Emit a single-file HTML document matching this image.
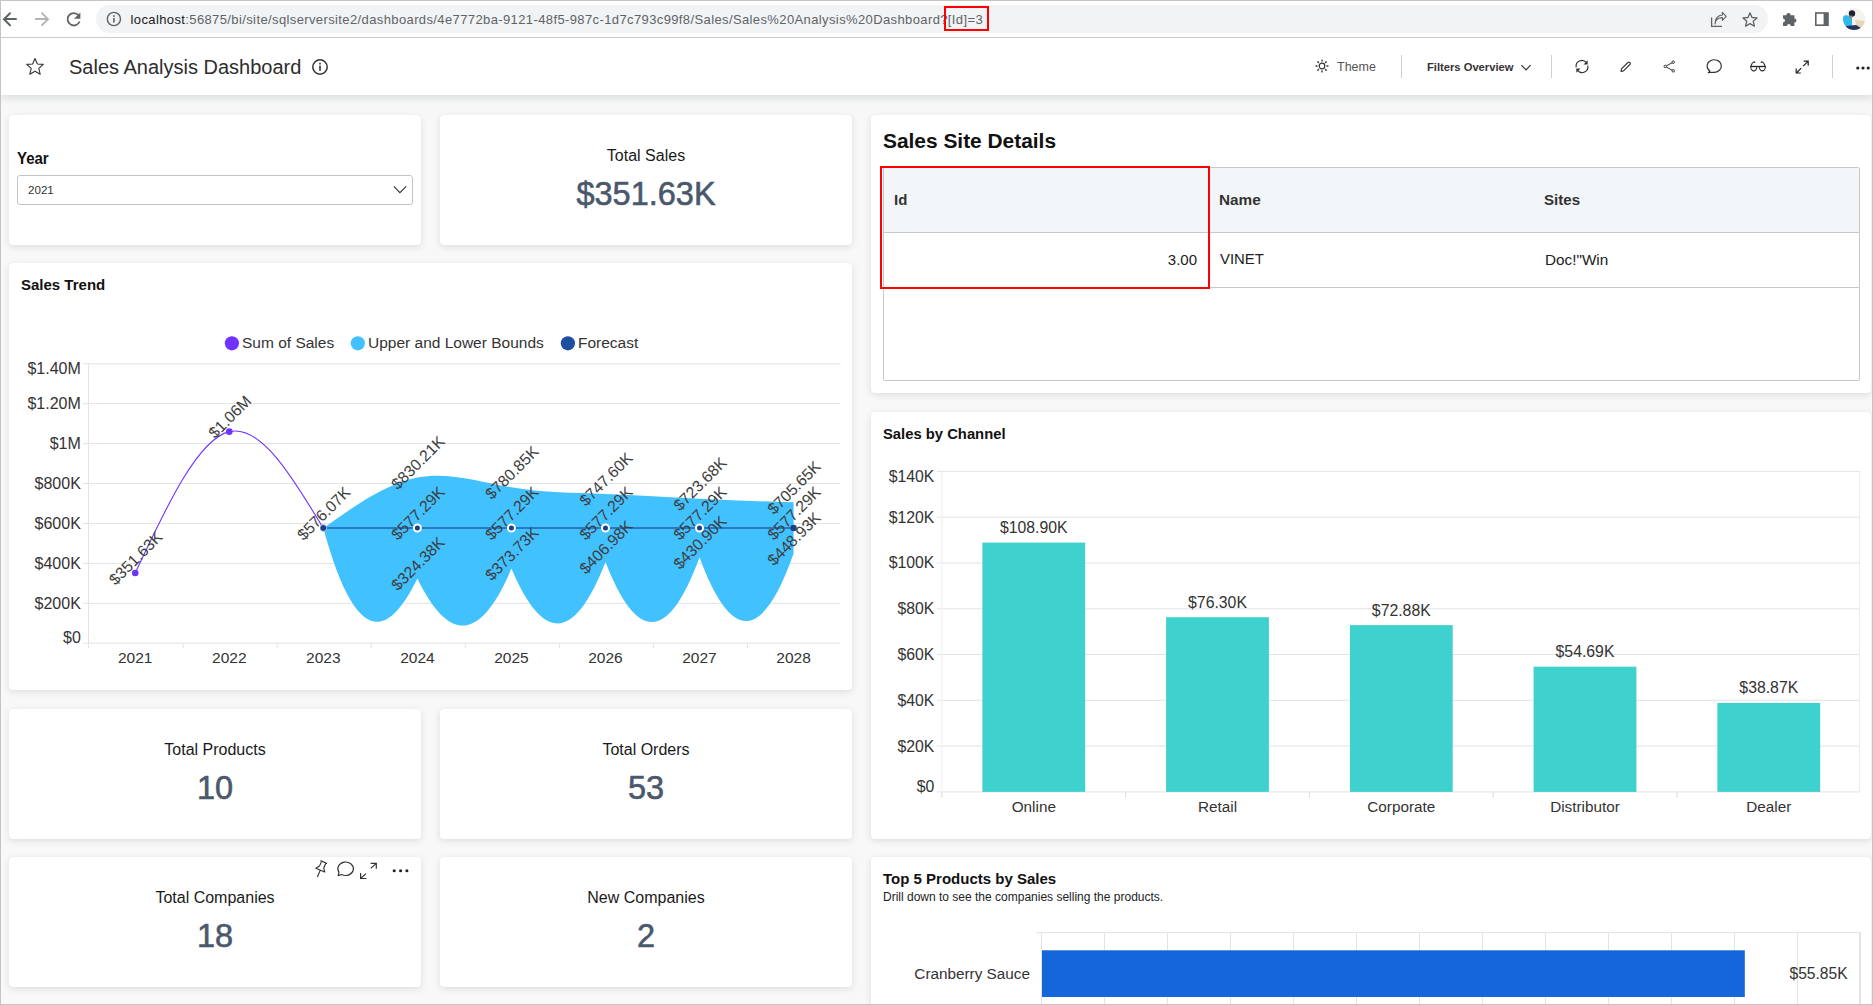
<!DOCTYPE html><html><head><meta charset="utf-8"><title>Sales Analysis Dashboard</title><style>
*{box-sizing:border-box}
html,body{margin:0;padding:0}
body{width:1873px;height:1005px;overflow:hidden;position:relative;background:#f8f8f8;font-family:"Liberation Sans",sans-serif;color:#222}
.a{position:absolute}
.t{position:absolute;white-space:nowrap;line-height:1}
.panel{position:absolute;background:#fff;border-radius:4px;box-shadow:0 2px 7px rgba(30,40,60,0.12),0 0 1px rgba(0,0,0,0.06)}
.kt{position:absolute;left:0;right:0;text-align:center;white-space:nowrap;line-height:1;font-size:16px;color:#1a1a1a}
.kv{position:absolute;left:0;right:0;text-align:center;white-space:nowrap;line-height:1;font-size:32.5px;color:#4a586b;-webkit-text-stroke:0.6px #4a586b}
</style></head><body>
<div class="panel" style="left:9px;top:115px;width:412px;height:130px"><div class="t" style="left:8px;top:35.5px;font-size:15px;font-weight:bold;color:#111;transform:scaleY(1.15);transform-origin:0 100%">Year</div><div class="a" style="left:8px;top:60px;width:396px;height:30px;border:1px solid #c4c4c4;border-radius:3px;background:#fff"></div><div class="t" style="left:19px;top:69px;font-size:11.6px;color:#333">2021</div><svg class="a" style="left:383px;top:69px" width="15" height="10" viewBox="0 0 15 10"><path d="M1.9 2.3 7.9 8.7 14.2 2.3" fill="none" stroke="#333" stroke-width="1.1"/></svg></div>
<div class="panel" style="left:440px;top:115px;width:412px;height:130px"><div class="kt" style="top:33px">Total Sales</div><div class="kv" style="top:63px">$351.63K</div></div>
<div class="panel" style="left:9px;top:709px;width:412px;height:130px"><div class="kt" style="top:33px">Total Products</div><div class="kv" style="top:63px">10</div></div>
<div class="panel" style="left:440px;top:709px;width:412px;height:130px"><div class="kt" style="top:33px">Total Orders</div><div class="kv" style="top:63px">53</div></div>
<div class="panel" style="left:9px;top:857px;width:412px;height:130px"><div class="kt" style="top:33px">Total Companies</div><div class="kv" style="top:63px">18</div></div>
<div class="panel" style="left:440px;top:857px;width:412px;height:130px"><div class="kt" style="top:33px">New Companies</div><div class="kv" style="top:63px">2</div></div>
<div class="panel" style="left:871px;top:115px;width:1000px;height:278px"><div class="t" style="left:12px;top:15.5px;font-size:20.9px;font-weight:bold;color:#111">Sales Site Details</div><div class="a" style="left:12px;top:52px;width:977px;height:214px;border:1px solid #c8c8c8;border-radius:2px"></div><div class="a" style="left:13px;top:53px;width:975px;height:64px;background:#f3f6f9"></div><div class="a" style="left:12px;top:117px;width:977px;height:1px;background:#c8c8c8"></div><div class="a" style="left:12px;top:172px;width:977px;height:1px;background:#c8c8c8"></div><div class="t" style="left:23px;top:77px;font-size:15px;font-weight:bold;color:#333">Id</div><div class="t" style="left:348px;top:77px;font-size:15.3px;font-weight:bold;color:#333">Name</div><div class="t" style="left:673px;top:77px;font-size:15.1px;font-weight:bold;color:#333">Sites</div><div class="t" style="left:229px;width:97px;text-align:right;top:137px;font-size:15px;color:#222">3.00</div><div class="t" style="left:349px;top:137px;font-size:14.9px;color:#222">VINET</div><div class="t" style="left:674px;top:137px;font-size:15.3px;color:#222">Doc!"Win</div><div class="a" style="left:9px;top:51px;width:330px;height:123px;border:2px solid #fe0000"></div></div>
<div class="panel" style="left:9px;top:263px;width:843px;height:427px"><div class="t" style="left:12px;top:14px;font-size:15px;font-weight:bold;color:#111">Sales Trend</div></div>
<div class="panel" style="left:871px;top:412px;width:1000px;height:427px"><div class="t" style="left:12px;top:15px;font-size:14.8px;font-weight:bold;color:#111">Sales by Channel</div></div>
<div class="panel" style="left:871px;top:857px;width:1000px;height:163px"><div class="t" style="left:12px;top:14px;font-size:15px;font-weight:bold;color:#111">Top 5 Products by Sales</div><div class="t" style="left:12px;top:34px;font-size:12px;color:#222">Drill down to see the companies selling the products.</div></div>
<svg class="a" style="left:0;top:0" width="1873" height="1005" viewBox="0 0 1873 1005">
<path d="M83 643.2H840.6" stroke="#e3e3e3" stroke-width="1"/>
<path d="M83 603.3H840.6" stroke="#e3e3e3" stroke-width="1"/>
<path d="M83 563.4H840.6" stroke="#e3e3e3" stroke-width="1"/>
<path d="M83 523.5H840.6" stroke="#e3e3e3" stroke-width="1"/>
<path d="M83 483.5H840.6" stroke="#e3e3e3" stroke-width="1"/>
<path d="M83 443.6H840.6" stroke="#e3e3e3" stroke-width="1"/>
<path d="M83 403.7H840.6" stroke="#e3e3e3" stroke-width="1"/>
<path d="M83 363.8H840.6" stroke="#e3e3e3" stroke-width="1"/>
<path d="M88.5 363.8V643.2" stroke="#e3e3e3" stroke-width="1"/>
<path d="M88.6 643.2V648.2" stroke="#e3e3e3" stroke-width="1"/>
<path d="M183.2 643.2V648.2" stroke="#e3e3e3" stroke-width="1"/>
<path d="M277.2 643.2V648.2" stroke="#e3e3e3" stroke-width="1"/>
<path d="M371.2 643.2V648.2" stroke="#e3e3e3" stroke-width="1"/>
<path d="M465.3 643.2V648.2" stroke="#e3e3e3" stroke-width="1"/>
<path d="M559.4 643.2V648.2" stroke="#e3e3e3" stroke-width="1"/>
<path d="M653.4 643.2V648.2" stroke="#e3e3e3" stroke-width="1"/>
<path d="M747.5 643.2V648.2" stroke="#e3e3e3" stroke-width="1"/>
<text x="80.8" y="374.1" text-anchor="end" font-size="16" font-family="Liberation Sans" fill="#333" fill="#222">$1.40M</text>
<text x="80.8" y="408.9" text-anchor="end" font-size="16" font-family="Liberation Sans" fill="#333" fill="#222">$1.20M</text>
<text x="80.8" y="448.5" text-anchor="end" font-size="16" font-family="Liberation Sans" fill="#333" fill="#222">$1M</text>
<text x="80.8" y="488.5" text-anchor="end" font-size="16" font-family="Liberation Sans" fill="#333" fill="#222">$800K</text>
<text x="80.8" y="528.5" text-anchor="end" font-size="16" font-family="Liberation Sans" fill="#333" fill="#222">$600K</text>
<text x="80.8" y="568.5" text-anchor="end" font-size="16" font-family="Liberation Sans" fill="#333" fill="#222">$400K</text>
<text x="80.8" y="608.5" text-anchor="end" font-size="16" font-family="Liberation Sans" fill="#333" fill="#222">$200K</text>
<text x="80.8" y="643.1" text-anchor="end" font-size="16" font-family="Liberation Sans" fill="#333" fill="#222">$0</text>
<text x="135.2" y="663.1" text-anchor="middle" font-size="15.5" font-family="Liberation Sans" fill="#333" fill="#222">2021</text>
<text x="229.3" y="663.1" text-anchor="middle" font-size="15.5" font-family="Liberation Sans" fill="#333" fill="#222">2022</text>
<text x="323.3" y="663.1" text-anchor="middle" font-size="15.5" font-family="Liberation Sans" fill="#333" fill="#222">2023</text>
<text x="417.4" y="663.1" text-anchor="middle" font-size="15.5" font-family="Liberation Sans" fill="#333" fill="#222">2024</text>
<text x="511.4" y="663.1" text-anchor="middle" font-size="15.5" font-family="Liberation Sans" fill="#333" fill="#222">2025</text>
<text x="605.5" y="663.1" text-anchor="middle" font-size="15.5" font-family="Liberation Sans" fill="#333" fill="#222">2026</text>
<text x="699.5" y="663.1" text-anchor="middle" font-size="15.5" font-family="Liberation Sans" fill="#333" fill="#222">2027</text>
<text x="793.6" y="663.1" text-anchor="middle" font-size="15.5" font-family="Liberation Sans" fill="#333" fill="#222">2028</text>
<circle cx="231.9" cy="343.3" r="7.1" fill="#7033ff"/>
<text x="242" y="347.8" font-size="15.5" font-family="Liberation Sans" fill="#333" fill="#222">Sum of Sales</text>
<circle cx="357.8" cy="343.3" r="7.1" fill="#42c1ff"/>
<text x="368" y="347.8" font-size="15.5" font-family="Liberation Sans" fill="#333" fill="#222">Upper and Lower Bounds</text>
<circle cx="567.9" cy="343.3" r="7.1" fill="#1d4f9e"/>
<text x="578" y="347.8" font-size="15.5" font-family="Liberation Sans" fill="#333" fill="#222">Forecast</text>
<path d="M323.32 528.23C354.68 505.85 386.03 483.47 417.38 477.51C448.72 471.56 480.07 482.04 511.42 487.36C542.77 492.69 574.12 492.87 605.48 494.00C636.82 495.13 668.18 497.22 699.52 498.77C730.88 500.33 762.23 501.35 793.58 502.37L793.58 553.61C762.23 642.8 730.88 642.8 699.52 557.20C668.18 642.8 636.82 642.8 605.48 561.98C574.12 642.8 542.77 642.8 511.42 568.61C480.07 642.8 448.72 642.8 417.38 578.46C386.03 642.8 354.68 642.8 323.32 528.23Z" fill="#42c1ff"/>
<path d="M323.32 527.99H793.58" stroke="#1d4f9e" stroke-opacity="0.85" stroke-width="1.7"/>
<path d="M135.22 573.02C166.57 506.07 197.92 439.12 229.27 431.65C260.62 424.19 291.97 476.21 323.32 528.23" fill="none" stroke="#7033ff" stroke-width="1.1"/>
<circle cx="135.22" cy="573.02" r="3.3" fill="#7033ff"/>
<circle cx="229.27" cy="431.65" r="3.3" fill="#7033ff"/>
<circle cx="323.32" cy="527.99" r="3.4" fill="#1d3f8a" stroke="#fff" stroke-width="0.6"/>
<circle cx="417.38" cy="527.99" r="3.5" fill="#1d3f8a" stroke="#fff" stroke-width="2"/>
<circle cx="511.42" cy="527.99" r="3.5" fill="#1d3f8a" stroke="#fff" stroke-width="2"/>
<circle cx="605.48" cy="527.99" r="3.5" fill="#1d3f8a" stroke="#fff" stroke-width="2"/>
<circle cx="699.52" cy="527.99" r="3.5" fill="#1d3f8a" stroke="#fff" stroke-width="2"/>
<circle cx="793.58" cy="527.99" r="3.2" fill="#1d3f8a"/>
<text x="135.7" y="563.6" text-anchor="middle" font-size="15.8" font-family="Liberation Sans" fill="#3d3d3d" transform="rotate(-45 135.7 558.2)">$351.63K</text>
<text x="229.8" y="422.3" text-anchor="middle" font-size="15.8" font-family="Liberation Sans" fill="#3d3d3d" transform="rotate(-45 229.8 416.9)">$1.06M</text>
<text x="323.8" y="518.8" text-anchor="middle" font-size="15.8" font-family="Liberation Sans" fill="#3d3d3d" transform="rotate(-45 323.8 513.4)">$576.07K</text>
<text x="417.9" y="468.1" text-anchor="middle" font-size="15.8" font-family="Liberation Sans" fill="#3d3d3d" transform="rotate(-45 417.9 462.7)">$830.21K</text>
<text x="417.9" y="518.6" text-anchor="middle" font-size="15.8" font-family="Liberation Sans" fill="#3d3d3d" transform="rotate(-45 417.9 513.2)">$577.29K</text>
<text x="417.9" y="569.1" text-anchor="middle" font-size="15.8" font-family="Liberation Sans" fill="#3d3d3d" transform="rotate(-45 417.9 563.7)">$324.38K</text>
<text x="511.9" y="478.0" text-anchor="middle" font-size="15.8" font-family="Liberation Sans" fill="#3d3d3d" transform="rotate(-45 511.9 472.6)">$780.85K</text>
<text x="511.9" y="518.6" text-anchor="middle" font-size="15.8" font-family="Liberation Sans" fill="#3d3d3d" transform="rotate(-45 511.9 513.2)">$577.29K</text>
<text x="511.9" y="559.2" text-anchor="middle" font-size="15.8" font-family="Liberation Sans" fill="#3d3d3d" transform="rotate(-45 511.9 553.8)">$373.73K</text>
<text x="606.0" y="484.6" text-anchor="middle" font-size="15.8" font-family="Liberation Sans" fill="#3d3d3d" transform="rotate(-45 606.0 479.2)">$747.60K</text>
<text x="606.0" y="518.6" text-anchor="middle" font-size="15.8" font-family="Liberation Sans" fill="#3d3d3d" transform="rotate(-45 606.0 513.2)">$577.29K</text>
<text x="606.0" y="552.6" text-anchor="middle" font-size="15.8" font-family="Liberation Sans" fill="#3d3d3d" transform="rotate(-45 606.0 547.2)">$406.98K</text>
<text x="700.0" y="489.4" text-anchor="middle" font-size="15.8" font-family="Liberation Sans" fill="#3d3d3d" transform="rotate(-45 700.0 484.0)">$723.68K</text>
<text x="700.0" y="518.6" text-anchor="middle" font-size="15.8" font-family="Liberation Sans" fill="#3d3d3d" transform="rotate(-45 700.0 513.2)">$577.29K</text>
<text x="700.0" y="547.8" text-anchor="middle" font-size="15.8" font-family="Liberation Sans" fill="#3d3d3d" transform="rotate(-45 700.0 542.4)">$430.90K</text>
<text x="794.1" y="493.0" text-anchor="middle" font-size="15.8" font-family="Liberation Sans" fill="#3d3d3d" transform="rotate(-45 794.1 487.6)">$705.65K</text>
<text x="794.1" y="518.6" text-anchor="middle" font-size="15.8" font-family="Liberation Sans" fill="#3d3d3d" transform="rotate(-45 794.1 513.2)">$577.29K</text>
<text x="794.1" y="544.2" text-anchor="middle" font-size="15.8" font-family="Liberation Sans" fill="#3d3d3d" transform="rotate(-45 794.1 538.8)">$448.93K</text>
<path d="M937 791.9H1860" stroke="#e3e3e3" stroke-width="1"/>
<path d="M937 746.1H1860" stroke="#e3e3e3" stroke-width="1"/>
<path d="M937 700.3H1860" stroke="#e3e3e3" stroke-width="1"/>
<path d="M937 654.5H1860" stroke="#e3e3e3" stroke-width="1"/>
<path d="M937 608.8H1860" stroke="#e3e3e3" stroke-width="1"/>
<path d="M937 563.0H1860" stroke="#e3e3e3" stroke-width="1"/>
<path d="M937 517.2H1860" stroke="#e3e3e3" stroke-width="1"/>
<path d="M937 471.4H1860" stroke="#e3e3e3" stroke-width="1"/>
<path d="M941.9 471.4V791.9M1859.5 471.4V791.9" stroke="#eeeeee" stroke-width="1"/>
<path d="M941.9 791.9V797.9" stroke="#dcdcdc" stroke-width="1"/>
<path d="M1125.7 791.9V797.9" stroke="#dcdcdc" stroke-width="1"/>
<path d="M1309.4 791.9V797.9" stroke="#dcdcdc" stroke-width="1"/>
<path d="M1493.2 791.9V797.9" stroke="#dcdcdc" stroke-width="1"/>
<path d="M1676.9 791.9V797.9" stroke="#dcdcdc" stroke-width="1"/>
<text x="934.4" y="791.5" text-anchor="end" font-size="15.8" font-family="Liberation Sans" fill="#333" fill="#222">$0</text>
<text x="934.4" y="751.5" text-anchor="end" font-size="15.8" font-family="Liberation Sans" fill="#333" fill="#222">$20K</text>
<text x="934.4" y="705.7" text-anchor="end" font-size="15.8" font-family="Liberation Sans" fill="#333" fill="#222">$40K</text>
<text x="934.4" y="659.9" text-anchor="end" font-size="15.8" font-family="Liberation Sans" fill="#333" fill="#222">$60K</text>
<text x="934.4" y="614.2" text-anchor="end" font-size="15.8" font-family="Liberation Sans" fill="#333" fill="#222">$80K</text>
<text x="934.4" y="568.4" text-anchor="end" font-size="15.8" font-family="Liberation Sans" fill="#333" fill="#222">$100K</text>
<text x="934.4" y="522.6" text-anchor="end" font-size="15.8" font-family="Liberation Sans" fill="#333" fill="#222">$120K</text>
<text x="934.4" y="481.6" text-anchor="end" font-size="15.8" font-family="Liberation Sans" fill="#333" fill="#222">$140K</text>
<rect x="982.4" y="542.6" width="102.8" height="249.3" fill="#3ed1cd"/>
<text x="1033.8" y="533.0" text-anchor="middle" font-size="15.8" font-family="Liberation Sans" fill="#333">$108.90K</text>
<text x="1033.8" y="811.9" text-anchor="middle" font-size="15.3" font-family="Liberation Sans" fill="#333" fill="#222">Online</text>
<rect x="1166.1" y="617.2" width="102.8" height="174.7" fill="#3ed1cd"/>
<text x="1217.5" y="607.6" text-anchor="middle" font-size="15.8" font-family="Liberation Sans" fill="#333">$76.30K</text>
<text x="1217.5" y="811.9" text-anchor="middle" font-size="15.3" font-family="Liberation Sans" fill="#333" fill="#222">Retail</text>
<rect x="1349.9" y="625.1" width="102.8" height="166.8" fill="#3ed1cd"/>
<text x="1401.3" y="615.5" text-anchor="middle" font-size="15.8" font-family="Liberation Sans" fill="#333">$72.88K</text>
<text x="1401.3" y="811.9" text-anchor="middle" font-size="15.3" font-family="Liberation Sans" fill="#333" fill="#222">Corporate</text>
<rect x="1533.6" y="666.7" width="102.8" height="125.2" fill="#3ed1cd"/>
<text x="1585.0" y="657.1" text-anchor="middle" font-size="15.8" font-family="Liberation Sans" fill="#333">$54.69K</text>
<text x="1585.0" y="811.9" text-anchor="middle" font-size="15.3" font-family="Liberation Sans" fill="#333" fill="#222">Distributor</text>
<rect x="1717.4" y="702.9" width="102.8" height="89.0" fill="#3ed1cd"/>
<text x="1768.8" y="693.3" text-anchor="middle" font-size="15.8" font-family="Liberation Sans" fill="#333">$38.87K</text>
<text x="1768.8" y="811.9" text-anchor="middle" font-size="15.3" font-family="Liberation Sans" fill="#333" fill="#222">Dealer</text>
<path d="M1036 932.5H1860" stroke="#e3e3e3" stroke-width="1"/>
<path d="M1041.5 932V1005" stroke="#e3e3e3" stroke-width="1"/>
<path d="M1104.5 932V1005" stroke="#e3e3e3" stroke-width="1"/>
<path d="M1167.5 932V1005" stroke="#e3e3e3" stroke-width="1"/>
<path d="M1230.5 932V1005" stroke="#e3e3e3" stroke-width="1"/>
<path d="M1293.5 932V1005" stroke="#e3e3e3" stroke-width="1"/>
<path d="M1356.5 932V1005" stroke="#e3e3e3" stroke-width="1"/>
<path d="M1419.5 932V1005" stroke="#e3e3e3" stroke-width="1"/>
<path d="M1482.5 932V1005" stroke="#e3e3e3" stroke-width="1"/>
<path d="M1545.5 932V1005" stroke="#e3e3e3" stroke-width="1"/>
<path d="M1608.5 932V1005" stroke="#e3e3e3" stroke-width="1"/>
<path d="M1671.5 932V1005" stroke="#e3e3e3" stroke-width="1"/>
<path d="M1734.5 932V1005" stroke="#e3e3e3" stroke-width="1"/>
<path d="M1797.5 932V1005" stroke="#e3e3e3" stroke-width="1"/>
<path d="M1860.5 932V1005" stroke="#e3e3e3" stroke-width="1"/>
<path d="M1859.5 932V1005" stroke="#e3e3e3" stroke-width="1"/>
<rect x="1042" y="950.3" width="702.8" height="46.7" fill="#1565db"/>
<text x="1030" y="979.1" text-anchor="end" font-size="15.3" font-family="Liberation Sans" fill="#333" fill="#222">Cranberry Sauce</text>
<text x="1789.5" y="979.1" font-size="15.6" font-family="Liberation Sans" fill="#333">$55.85K</text>
<g transform="translate(320.6 869.4) rotate(23)"><path d="M-3.6 -8H3.6M-2.3 -8V-2.6L-4.8 0.8H4.8L2.3 -2.6V-8M0 0.8V8.2" fill="none" stroke="#333" stroke-width="1.15" stroke-linejoin="round"/></g>
<path d="M338.1 875.6 339 872.3A7.8 6.7 0 1 1 341.6 874.5Z" fill="none" stroke="#333" stroke-width="1.15" stroke-linejoin="round"/>
<path d="M370.8 868.4 376 863.6M370.6 863.4H376.3V868.8M366 873.6 360.8 878.4M360.6 872.9V878.5H366.4" fill="none" stroke="#333" stroke-width="1.2"/>
<circle cx="394.2" cy="870.8" r="1.55" fill="#222"/>
<circle cx="400.6" cy="870.8" r="1.55" fill="#222"/>
<circle cx="406.9" cy="870.8" r="1.55" fill="#222"/>
</svg>
<div class="a" style="left:0;top:38px;width:1873px;height:57px;background:#fff;box-shadow:0 3px 8px rgba(25,35,55,0.13)"></div>
<svg class="a" style="left:25px;top:57px" width="20" height="19" viewBox="0 0 20 19">
<path d="M10 1.5 12.4 7 18.3 7.4 13.8 11.3 15.2 17.3 10 14.2 4.8 17.3 6.2 11.3 1.7 7.4 7.6 7Z" fill="none" stroke="#333" stroke-width="1.1" stroke-linejoin="round"/></svg>
<div class="t" style="left:69px;top:57px;font-size:20px;color:#2d2d2d">Sales Analysis Dashboard</div>
<svg class="a" style="left:311px;top:58px" width="18" height="18" viewBox="0 0 18 18">
<circle cx="9" cy="9" r="7.2" fill="none" stroke="#333" stroke-width="1.5"/>
<rect x="8.2" y="7.6" width="1.6" height="5.2" fill="#333"/><rect x="8.2" y="4.8" width="1.6" height="1.7" fill="#333"/></svg>
<svg class="a" style="left:1314.5px;top:59.2px" width="14" height="14" viewBox="0 0 14 14"><circle cx="7" cy="7" r="2.8" fill="none" stroke="#333" stroke-width="1.2"/><path d="M12.00 7.00L12.90 7.00" stroke="#333" stroke-width="1.4" stroke-linecap="round"/><path d="M10.54 10.54L11.17 11.17" stroke="#333" stroke-width="1.4" stroke-linecap="round"/><path d="M7.00 12.00L7.00 12.90" stroke="#333" stroke-width="1.4" stroke-linecap="round"/><path d="M3.46 10.54L2.83 11.17" stroke="#333" stroke-width="1.4" stroke-linecap="round"/><path d="M2.00 7.00L1.10 7.00" stroke="#333" stroke-width="1.4" stroke-linecap="round"/><path d="M3.46 3.46L2.83 2.83" stroke="#333" stroke-width="1.4" stroke-linecap="round"/><path d="M7.00 2.00L7.00 1.10" stroke="#333" stroke-width="1.4" stroke-linecap="round"/><path d="M10.54 3.46L11.17 2.83" stroke="#333" stroke-width="1.4" stroke-linecap="round"/></svg>
<div class="t" style="left:1337px;top:61.3px;font-size:12.5px;color:#555">Theme</div>
<div class="a" style="left:1401px;top:55px;width:1px;height:23px;background:#cfcfcf"></div>
<div class="t" style="left:1427px;top:62px;font-size:11.2px;font-weight:bold;color:#333">Filters Overview</div>
<svg class="a" style="left:1520px;top:63px" width="12" height="9" viewBox="0 0 12 9"><path d="M1.4 2.2 6 6.8 10.6 2.2" fill="none" stroke="#333" stroke-width="1.2"/></svg>
<div class="a" style="left:1551px;top:55px;width:1px;height:23px;background:#cfcfcf"></div>
<svg class="a" style="left:1574px;top:58px" width="16" height="17" viewBox="0 0 16 17">
<path d="M2.2 9.4A5.8 5.8 0 0 1 12.4 4.6" fill="none" stroke="#333" stroke-width="1.15"/>
<path d="M13.8 7.6A5.8 5.8 0 0 1 3.6 12.4" fill="none" stroke="#333" stroke-width="1.15"/>
<path d="M13.7 2.2V6.4H9.6Z" fill="#333"/><path d="M2.3 14.8V10.6H6.4Z" fill="#333"/></svg>
<svg class="a" style="left:1619px;top:60px" width="14" height="13" viewBox="0 0 14 13">
<path d="M2 11.4 2.5 8.9 8.9 2.5A1.15 1.15 0 0 1 10.9 4.5L4.5 10.9Z" fill="none" stroke="#333" stroke-width="1.1" stroke-linejoin="round"/></svg>
<svg class="a" style="left:1663px;top:60px" width="13" height="13" viewBox="0 0 13 13">
<circle cx="2.3" cy="6.4" r="1.25" fill="none" stroke="#333" stroke-width="1"/><circle cx="10.2" cy="2.2" r="1.25" fill="none" stroke="#333" stroke-width="1"/><circle cx="10.2" cy="10.8" r="1.25" fill="none" stroke="#333" stroke-width="1"/>
<path d="M3.4 5.8 9.1 2.8M3.4 7 9.1 10.2" stroke="#333" stroke-width="1"/></svg>
<svg class="a" style="left:1704px;top:57px" width="20" height="18" viewBox="0 0 20 18">
<path d="M4.2 15.6 6 14.1A7.1 6.3 0 1 1 8.8 15.2Z" fill="none" stroke="#333" stroke-width="1.1" stroke-linejoin="round"/></svg>
<svg class="a" style="left:1749px;top:59px" width="18" height="15" viewBox="0 0 18 15">
<path d="M1.2 7.5H16.8" stroke="#222" stroke-width="1.3"/>
<path d="M1.7 7.5A3.05 4.4 0 0 0 7.8 7.5M10.3 7.5A3.05 4.4 0 0 0 16.4 7.5" fill="none" stroke="#333" stroke-width="1.15"/>
<path d="M1.9 7.3C2.4 5.2 3.6 3.2 5.2 2.7 5.7 2.9 5.9 3.4 5.9 3.9M16.1 7.3C15.6 5.2 14.4 3.2 12.8 2.7 12.3 2.9 12.1 3.4 12.1 3.9" fill="none" stroke="#333" stroke-width="1.15"/></svg>
<svg class="a" style="left:1794px;top:59px" width="16" height="16" viewBox="0 0 16 16">
<path d="M9.2 7.2 14 2.4M9.6 2.2H14.2V6.8M7.2 9.2 2.4 14M2.2 9.4V14H6.8" fill="none" stroke="#222" stroke-width="1.2"/></svg>
<div class="a" style="left:1832px;top:55px;width:1px;height:23px;background:#cfcfcf"></div>
<svg class="a" style="left:1855px;top:65px" width="17" height="6" viewBox="0 0 17 6"><circle cx="2.8" cy="3" r="1.6" fill="#222"/><circle cx="8" cy="3" r="1.6" fill="#222"/><circle cx="13.2" cy="3" r="1.6" fill="#222"/></svg>
<div class="a" style="left:0;top:0;width:1873px;height:38px;background:#fff"></div>
<div class="a" style="left:96px;top:5px;width:1672px;height:28px;border-radius:14px;background:#f1f3f4"></div>
<div class="a" style="left:0;top:37px;width:1873px;height:1px;background:#cbcbcb"></div>
<svg class="a" style="left:0;top:9px" width="22" height="22" viewBox="0 0 22 22">
<path d="M16 10H5.2M10 4.2 4 10.2l6 6" fill="none" stroke="#5f6368" stroke-width="2" stroke-linecap="round"/></svg>
<svg class="a" style="left:32px;top:9px" width="22" height="22" viewBox="0 0 22 22">
<path d="M3.8 10H15.2M10 4.2l6 6-6 6" fill="none" stroke="#b4b4b4" stroke-width="1.9" stroke-linecap="round"/></svg>
<svg class="a" style="left:63.4px;top:8.6px" width="22" height="22" viewBox="0 0 22 22">
<path d="M15.6 6.3A6.2 6.2 0 1 0 16.6 12.5" fill="none" stroke="#5f6368" stroke-width="1.8"/>
<path d="M17.4 3.4v6.4h-6.4z" fill="#5f6368"/></svg>
<svg class="a" style="left:106px;top:11px" width="16" height="16" viewBox="0 0 16 16">
<circle cx="7.9" cy="8" r="6.6" fill="none" stroke="#5f6368" stroke-width="1.4"/>
<rect x="7.1" y="7" width="1.6" height="4.6" fill="#5f6368"/><rect x="7.1" y="4.2" width="1.6" height="1.7" fill="#5f6368"/></svg>
<div class="t" id="url" style="left:130.5px;top:13px;font-size:13px;color:#5f6368;letter-spacing:0.385px"><span style="color:#202124">localhost</span>:56875/bi/site/sqlserversite2/dashboards/4e7772ba-9121-48f5-987c-1d7c793c99f8/Sales/Sales%20Analysis%20Dashboard?[Id]=3</div>
<div class="a" style="left:944px;top:6px;width:45px;height:25px;border:2px solid #fe0000"></div>
<svg class="a" style="left:1709px;top:11px" width="19" height="17" viewBox="0 0 19 17">
<path d="M2.6 6.5V15.3H13" fill="none" stroke="#5f6368" stroke-width="1.3"/>
<path d="M6 13C6.4 8.6 9.4 6.6 13.4 6.6V9.4L17.2 5.3 13.4 1.3V4C8.8 4.2 6.2 7.6 6 13Z" fill="none" stroke="#5f6368" stroke-width="1.15" stroke-linejoin="round"/></svg>
<svg class="a" style="left:1741px;top:11px" width="18" height="17" viewBox="0 0 18 17">
<path d="M9 1.8 11 6.5 16 6.9 12.2 10.2 13.4 15.2 9 12.6 4.6 15.2 5.8 10.2 2 6.9 7 6.5Z" fill="none" stroke="#5f6368" stroke-width="1.3" stroke-linejoin="round"/></svg>
<svg class="a" style="left:1781px;top:11px" width="18" height="17" viewBox="0 0 18 17">
<path d="M2 4.2H5.3A2.2 2.2 0 0 1 9.7 4.2H13.4V7.4A2.1 2.1 0 0 1 13.4 11.6V15H9.8A1.9 1.9 0 0 0 6 15H2V11.4A1.9 1.9 0 0 0 2 7.6Z" fill="#5f6368"/></svg>
<svg class="a" style="left:1814px;top:11px" width="16" height="16" viewBox="0 0 16 16">
<rect x="1.8" y="2" width="12.2" height="12.2" fill="none" stroke="#5f6368" stroke-width="1.6"/><rect x="9.6" y="2" width="4.4" height="12.2" fill="#5f6368"/></svg>
<svg class="a" style="left:1842px;top:7px" width="24" height="24" viewBox="0 0 24 24">
<defs><clipPath id="av"><circle cx="12" cy="12" r="11"/></clipPath></defs>
<g clip-path="url(#av)"><rect width="24" height="24" fill="#f4f2ee"/>
<path d="M13 13 23 14 23 20 15 21Z" fill="#e6d6b8"/>
<path d="M0 10 4 8 10 10 10 20 6 22 0 20Z" fill="#30b8ec"/>
<circle cx="10" cy="6.5" r="3.2" fill="#1c2230"/><circle cx="9" cy="10" r="1.4" fill="#b07a5a"/>
<path d="M4 19 14 18 19 21 16 25 4 25Z" fill="#24345c"/></g></svg>
<div class="a" style="left:0;top:0;width:1873px;height:1005px;border:1px solid #c4c4c4;border-right-width:1px"></div>
</body></html>
